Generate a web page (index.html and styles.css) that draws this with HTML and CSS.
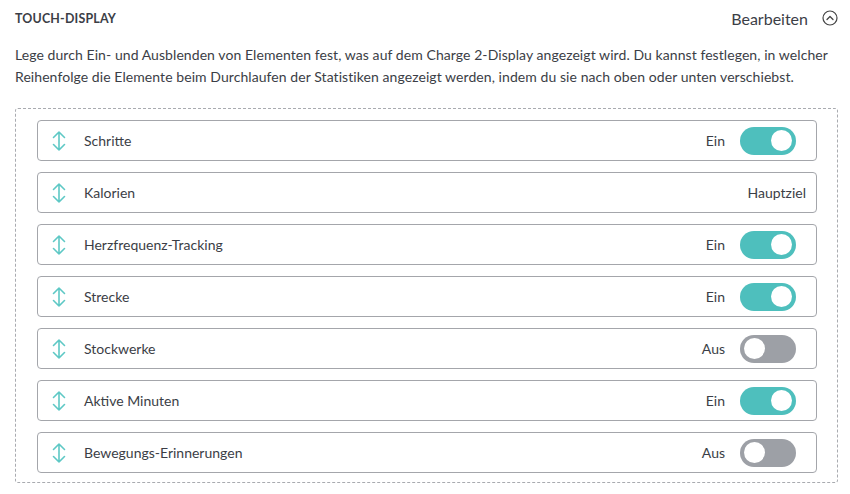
FILE: index.html
```html
<!DOCTYPE html>
<html lang="de">
<head>
<meta charset="utf-8">
<link rel="stylesheet" href="styles.css">
</head>
<body>
<section class="panel">
  <header class="head">
    <h2 class="title">TOUCH-DISPLAY</h2>
    <div class="edit">
      <span>Bearbeiten</span>
      <svg class="chev" width="16" height="16" viewBox="0 0 16 16"><circle cx="8" cy="8" r="7" fill="none" stroke="#444" stroke-width="1.2"/><path d="M5 9.5 L8 6.5 L11 9.5" fill="none" stroke="#444" stroke-width="1.3" stroke-linecap="round" stroke-linejoin="round"/></svg>
    </div>
  </header>
  <p class="desc">Lege durch Ein- und Ausblenden von Elementen fest, was auf dem Charge 2-Display angezeigt wird. Du kannst festlegen, in welcher Reihenfolge die Elemente beim Durchlaufen der Statistiken angezeigt werden, indem du sie nach oben oder unten verschiebst.</p>
  <div class="list">
    <div class="row">
      <svg class="drag" width="14" height="22" viewBox="0 0 14 22"><path d="M7 2 V20 M1.5 7.5 L7 2 L12.5 7.5 M1.5 14.5 L7 20 L12.5 14.5" fill="none" stroke="#5ec8c5" stroke-width="1.6" stroke-linecap="round" stroke-linejoin="round"/></svg>
      <span class="label">Schritte</span>
      <span class="state">Ein</span>
      <span class="toggle on"><span class="knob"></span></span>
    </div>
    <div class="row">
      <svg class="drag" width="14" height="22" viewBox="0 0 14 22"><path d="M7 2 V20 M1.5 7.5 L7 2 L12.5 7.5 M1.5 14.5 L7 20 L12.5 14.5" fill="none" stroke="#5ec8c5" stroke-width="1.6" stroke-linecap="round" stroke-linejoin="round"/></svg>
      <span class="label">Kalorien</span>
      <span class="state">Hauptziel</span>
    </div>
    <div class="row">
      <svg class="drag" width="14" height="22" viewBox="0 0 14 22"><path d="M7 2 V20 M1.5 7.5 L7 2 L12.5 7.5 M1.5 14.5 L7 20 L12.5 14.5" fill="none" stroke="#5ec8c5" stroke-width="1.6" stroke-linecap="round" stroke-linejoin="round"/></svg>
      <span class="label">Herzfrequenz-Tracking</span>
      <span class="state">Ein</span>
      <span class="toggle on"><span class="knob"></span></span>
    </div>
    <div class="row">
      <svg class="drag" width="14" height="22" viewBox="0 0 14 22"><path d="M7 2 V20 M1.5 7.5 L7 2 L12.5 7.5 M1.5 14.5 L7 20 L12.5 14.5" fill="none" stroke="#5ec8c5" stroke-width="1.6" stroke-linecap="round" stroke-linejoin="round"/></svg>
      <span class="label">Strecke</span>
      <span class="state">Ein</span>
      <span class="toggle on"><span class="knob"></span></span>
    </div>
    <div class="row">
      <svg class="drag" width="14" height="22" viewBox="0 0 14 22"><path d="M7 2 V20 M1.5 7.5 L7 2 L12.5 7.5 M1.5 14.5 L7 20 L12.5 14.5" fill="none" stroke="#5ec8c5" stroke-width="1.6" stroke-linecap="round" stroke-linejoin="round"/></svg>
      <span class="label">Stockwerke</span>
      <span class="state">Aus</span>
      <span class="toggle off"><span class="knob"></span></span>
    </div>
    <div class="row">
      <svg class="drag" width="14" height="22" viewBox="0 0 14 22"><path d="M7 2 V20 M1.5 7.5 L7 2 L12.5 7.5 M1.5 14.5 L7 20 L12.5 14.5" fill="none" stroke="#5ec8c5" stroke-width="1.6" stroke-linecap="round" stroke-linejoin="round"/></svg>
      <span class="label">Aktive Minuten</span>
      <span class="state">Ein</span>
      <span class="toggle on"><span class="knob"></span></span>
    </div>
    <div class="row">
      <svg class="drag" width="14" height="22" viewBox="0 0 14 22"><path d="M7 2 V20 M1.5 7.5 L7 2 L12.5 7.5 M1.5 14.5 L7 20 L12.5 14.5" fill="none" stroke="#5ec8c5" stroke-width="1.6" stroke-linecap="round" stroke-linejoin="round"/></svg>
      <span class="label">Bewegungs-Erinnerungen</span>
      <span class="state">Aus</span>
      <span class="toggle off"><span class="knob"></span></span>
    </div>
  </div>
</section>
</body>
</html>
```
FILE: styles.css
```css
* { box-sizing: border-box; }
html, body { margin: 0; background: #fff; }
body {
  font-family: "Lato", "Open Sans", sans-serif;
  color: #3b3e46;
}
.panel {
  padding: 6px 12px 0 15px;
}
.head {
  display: flex;
  align-items: center;
  justify-content: space-between;
  height: 24px;
}
.title {
  margin: 0;
  font-size: 12.4px;
  font-weight: 700;
  letter-spacing: 0.2px;
  color: #3b3e46;
}
.edit {
  display: flex;
  align-items: center;
  gap: 14px;
  font-size: 16px;
}
.chev { display: block; }
.desc {
  margin: 14px 0 0 0;
  font-size: 14px;
  line-height: 22px;
  letter-spacing: 0.07px;
  padding-right: 10px;
}
.list {
  margin: 20px 0 0 0;
  width: 823px;
  border: 1px dashed #a9abb0;
  border-radius: 3px;
  padding: 11px 20px 9px 21px;
  display: flex;
  flex-direction: column;
  gap: 11px;
}
.row {
  height: 41px;
  border: 1px solid #a4a6ab;
  border-radius: 4px;
  display: flex;
  align-items: center;
  padding: 0 10px 0 14px;
  font-size: 14px;
}
.drag { display: block; flex: none; }
.label {
  margin-left: 18px;
  flex: 1;
}
.toggle {
  margin-left: 15px;
  margin-right: 10px;
  width: 56px;
  height: 28px;
  border-radius: 14px;
  display: flex;
  align-items: center;
  padding: 0 4px;
}
.toggle.on { background: #4ebfbd; justify-content: flex-end; }
.toggle.off { background: #9da0a6; justify-content: flex-start; }
.knob {
  width: 21px;
  height: 21px;
  border-radius: 50%;
  background: #fff;
}
```
